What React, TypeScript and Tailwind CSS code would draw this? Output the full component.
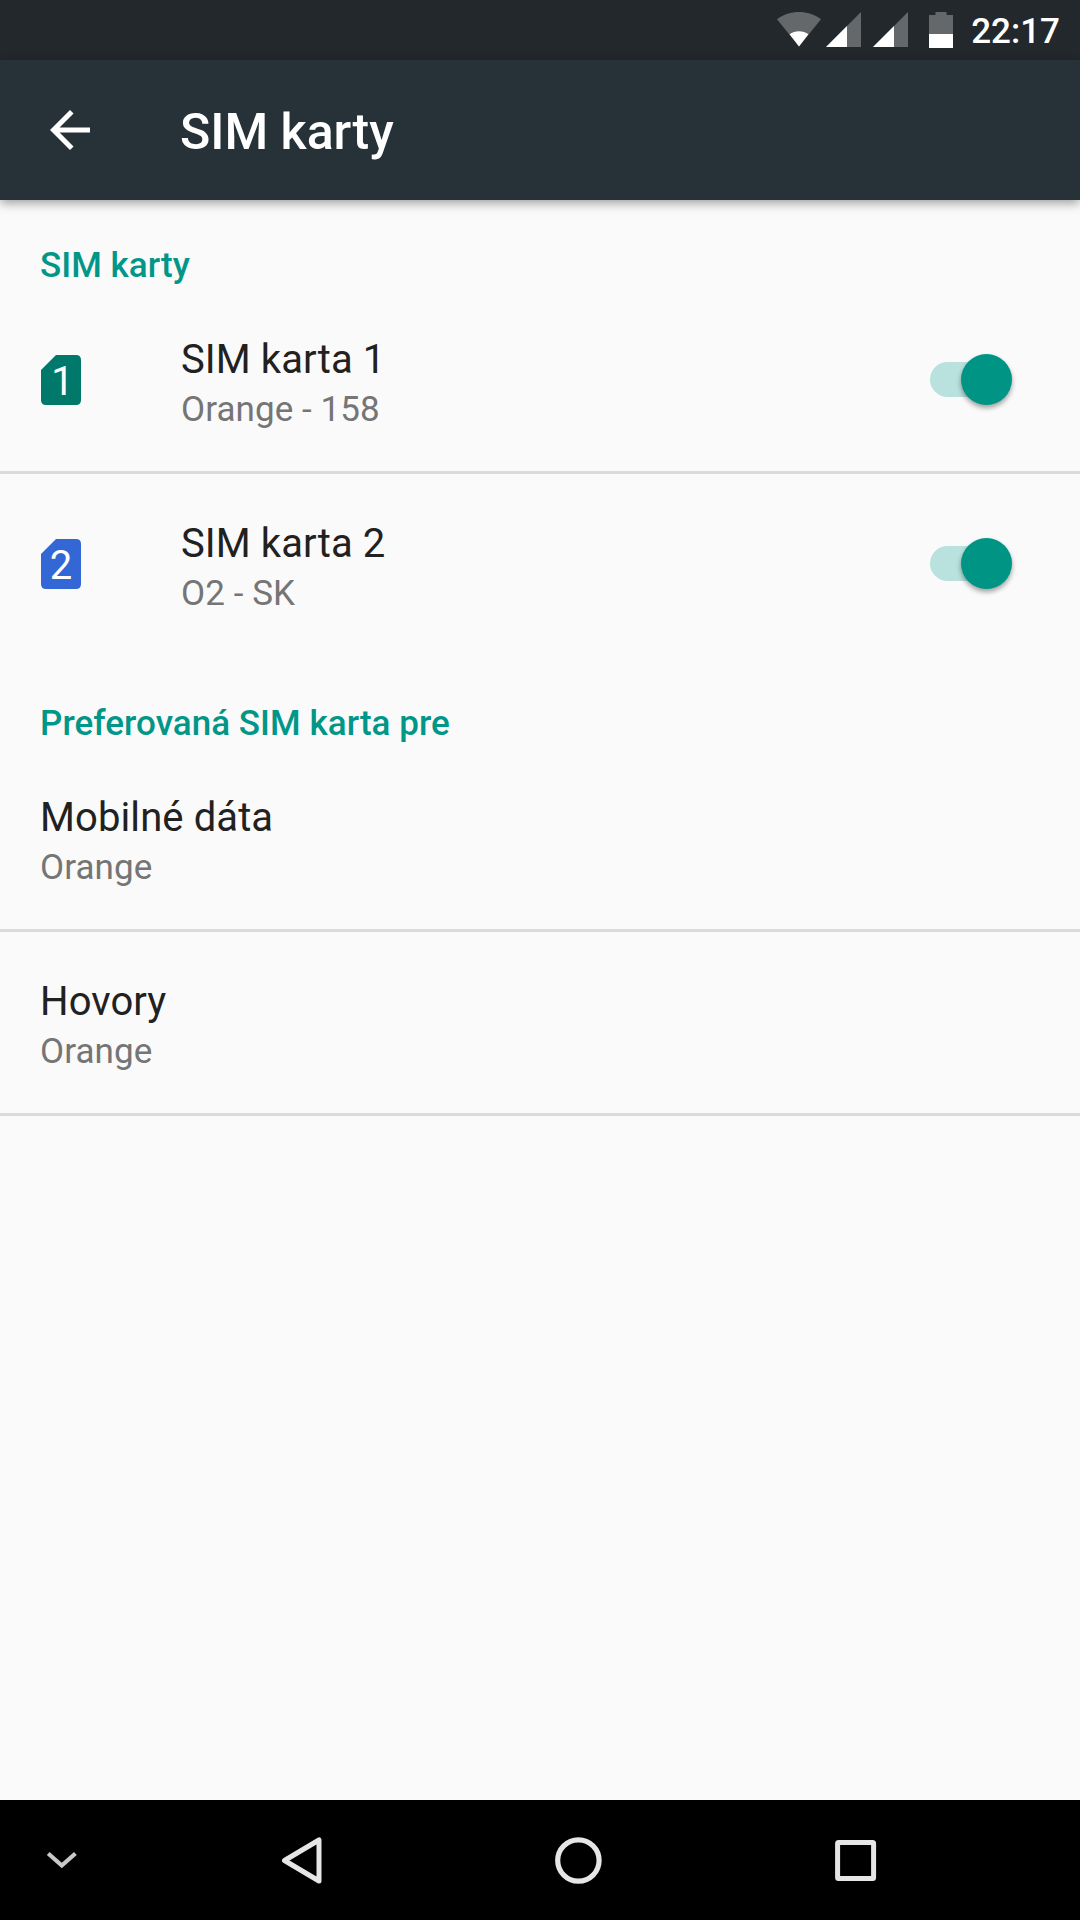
import React from "react";

function StatusBar() {
  return (
    <header className="flex h-[60px] items-center justify-end bg-[#22282c] pr-5">
      <svg className="mr-1 h-[60px] w-[46px]" viewBox="0 0 46 60">
        <path d="M1 19.3C14 9.6 32 9.6 45 19.3L23 46.5Z" fill="#64686b" />
        <path d="M13.6 34.2C18.5 30.2 27.5 30.2 32.4 34.2L23 46.5Z" fill="#fff" />
      </svg>
      <SignalIcon />
      <SignalIcon />
      <svg className="ml-[9px] h-[60px] w-6" viewBox="0 0 24 60">
        <path d="M6.5 12H17.5V15H24V34H0V15H6.5Z" fill="#64686b" />
        <path d="M0 34H24V48H0Z" fill="#fff" />
      </svg>
      <span className="ml-[18px] pt-1 text-[35px] leading-[60px] font-medium text-white">22:17</span>
    </header>
  );
}

function SignalIcon() {
  return (
    <svg className="mr-3 h-[60px] w-[35px]" viewBox="0 0 35 60">
      <path d="M0 47L35 12V47Z" fill="#64686b" />
      <path d="M0 47L21 26V47Z" fill="#fff" />
    </svg>
  );
}

function AppBar() {
  return (
    <div className="relative z-10 flex h-[140px] items-center bg-[#273238] pl-10 shadow-[0_3px_10px_rgba(0,0,0,0.38)]">
      <svg className="size-[60px]" viewBox="0 0 24 24" fill="#fff">
        <path d="M20 11H7.83l5.59-5.59L12 4l-8 8 8 8 1.41-1.41L7.83 13H20v-2z" />
      </svg>
      <h1 className="ml-20 pt-1 text-[50px] leading-[60px] font-medium text-white">SIM karty</h1>
    </div>
  );
}

function SectionHeader({ children }: { children: React.ReactNode }) {
  return (
    <h2 className="h-[90px] pt-[45px] pl-10 text-[35px] leading-[42px] font-medium tracking-[0.04px] text-[#009688]">
      {children}
    </h2>
  );
}

function SimIcon({ label, labelX, color }: { label: string; labelX: number; color: string }) {
  return (
    <svg className="mb-px ml-px h-[50px] w-10" viewBox="0 0 40 50">
      <path
        d="M15 0H35Q40 0 40 5V45Q40 50 35 50H5Q0 50 0 45V15Z"
        fill={color}
      />
      <text x={labelX} y="40" textAnchor="middle" fontSize="40" fill="#fff">
        {label}
      </text>
    </svg>
  );
}

function Switch() {
  return (
    <div className="mr-[68px] mb-0.5 flex h-[51px] w-[82px] items-center">
      <div className="h-[35px] w-[50px] rounded-l-full bg-[#b9e1dd]" />
      <div className="-ml-[19.3px] size-[51px] shrink-0 rounded-full bg-[#009485] shadow-[0_3px_5px_rgba(0,0,0,0.36)]" />
    </div>
  );
}

type RowProps = {
  title: string;
  summary: string;
  icon?: React.ReactNode;
  toggle?: boolean;
  divider?: boolean;
};

function Row({ title, summary, icon, toggle, divider = true }: RowProps) {
  return (
    <div
      className={
        divider
          ? "flex h-[184px] items-center border-b-[3px] border-[#dbdbdb] pl-10"
          : "flex h-[184px] items-center border-b-[3px] border-transparent pl-10"
      }
    >
      {icon && <div className="w-[141px]">{icon}</div>}
      <div className="flex-1 pt-[9px]">
        <div className="text-[40px] leading-[49px] tracking-[0.1px] text-[#212121]">{title}</div>
        <div className="text-[35px] leading-[51px] tracking-[0.08px] text-[#757575]">{summary}</div>
      </div>
      {toggle && <Switch />}
    </div>
  );
}

function NavBar() {
  return (
    <nav className="flex h-[120px] items-center bg-black">
      <svg className="ml-[46px] h-5 w-8" viewBox="0 0 32 20" fill="none">
        <path d="M2.2 3.5L15.8 15.5L29.4 3.5" stroke="#c8c8c8" strokeWidth="4.2" />
      </svg>
      <svg className="ml-[200px] h-[60px] w-12" viewBox="0 0 48 60" fill="none">
        <path d="M41 10V51L6.5 30.5Z" stroke="#e6e6e6" strokeWidth="5" strokeLinejoin="round" />
      </svg>
      <svg className="ml-[222px] h-[60px] w-[60px]" viewBox="0 0 60 60" fill="none">
        <circle cx="30.4" cy="30.5" r="20.7" stroke="#e6e6e6" strokeWidth="5.2" />
      </svg>
      <svg className="ml-[217px] h-[60px] w-[60px]" viewBox="0 0 60 60" fill="none">
        <rect x="12.6" y="12.6" width="36" height="36" rx="1" stroke="#e6e6e6" strokeWidth="5" />
      </svg>
    </nav>
  );
}

export default function App() {
  return (
    <div className="flex h-[1920px] w-[1080px] flex-col bg-[#fafafa] font-['Roboto',sans-serif]">
      <StatusBar />
      <AppBar />
      <main className="flex-1">
        <SectionHeader>SIM karty</SectionHeader>
        <Row
          title="SIM karta 1"
          summary="Orange - 158"
          icon={<SimIcon label="1" labelX={21.5} color="#00796b" />}
          toggle
        />
        <Row
          title="SIM karta 2"
          summary="O2 - SK"
          icon={<SimIcon label="2" labelX={20} color="#3367d6" />}
          toggle
          divider={false}
        />
        <SectionHeader>Preferovaná SIM karta pre</SectionHeader>
        <Row title="Mobilné dáta" summary="Orange" />
        <Row title="Hovory" summary="Orange" />
      </main>
      <NavBar />
    </div>
  );
}
